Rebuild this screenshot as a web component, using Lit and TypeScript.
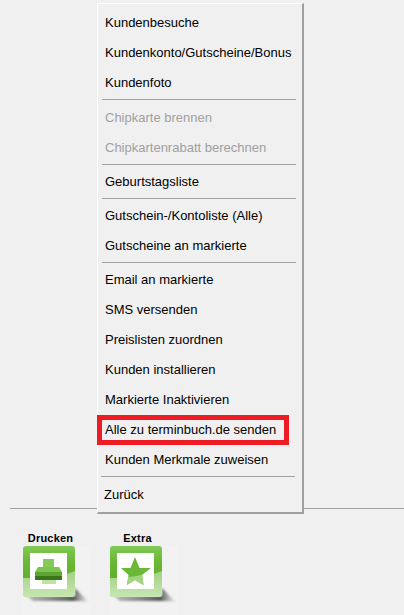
import { LitElement, html, css, svg } from "lit";
import { customElement } from "lit/decorators.js";

type Entry = { t?: string; off?: boolean; sep?: "" | "wide" | "end"; last?: boolean };
const MENU: Entry[] = [
  { t: "Kundenbesuche" },
  { t: "Kundenkonto/Gutscheine/Bonus" },
  { t: "Kundenfoto" },
  { sep: "wide" },
  { t: "Chipkarte brennen", off: true },
  { t: "Chipkartenrabatt berechnen", off: true },
  { sep: "" },
  { t: "Geburtstagsliste" },
  { sep: "" },
  { t: "Gutschein-/Kontoliste (Alle)" },
  { t: "Gutscheine an markierte" },
  { sep: "" },
  { t: "Email an markierte" },
  { t: "SMS versenden" },
  { t: "Preislisten zuordnen" },
  { t: "Kunden installieren" },
  { t: "Markierte Inaktivieren" },
  { t: "Alle zu terminbuch.de senden" },
  { t: "Kunden Merkmale zuweisen" },
  { sep: "end" },
  { t: "Zurück", last: true },
];

const tile = (id: string, glyph: unknown) => html`
  <svg class="tile" width="70" height="70" viewBox="0 0 70 70">
    <defs>
      <linearGradient id="bg${id}" x1="0" y1="0" x2="0" y2="1">
        <stop offset="0" stop-color="#82ca55" />
        <stop offset="0.3" stop-color="#6ab836" />
        <stop offset="0.6" stop-color="#62b02c" />
        <stop offset="1" stop-color="#74c040" />
      </linearGradient>
      <linearGradient id="sh${id}" x1="0" y1="0" x2="1" y2="0">
        <stop offset="0" stop-color="#555" stop-opacity="0.35" />
        <stop offset="0.75" stop-color="#444" stop-opacity="0.9" />
        <stop offset="1" stop-color="#888" stop-opacity="0.05" />
      </linearGradient>
      <linearGradient id="gl${id}" x1="0" y1="0" x2="0" y2="1">
        <stop offset="0" stop-color="#fff" stop-opacity="0.42" />
        <stop offset="1" stop-color="#fff" stop-opacity="0.6" />
      </linearGradient>
      <filter id="bl${id}"><feGaussianBlur stdDeviation="1.1" /></filter>
      <filter id="so${id}"><feGaussianBlur stdDeviation="0.5" /></filter>
    </defs>
    <rect x="0" y="0" width="68" height="69" fill="#f2f2f2" />
    <path d="M4 50 H52 V42 L66 56 L56 55 H10 Z" fill="url(#sh${id})" filter="url(#bl${id})" />
    <rect x="0" y="0" width="52" height="51" rx="3" fill="url(#bg${id})" />
    <path
      d="M0 32 C16 32 36 32 52 25 V48 A3 3 0 0 1 49 51 H3 A3 3 0 0 1 0 48 Z"
      fill="url(#gl${id})"
      filter="url(#so${id})"
    />
    <rect x="7" y="7" width="37" height="36" fill="#fff" />
    ${glyph}
  </svg>
`;

const printer = svg`
  <rect x="20" y="13" width="11" height="8" fill="#86cb5a" />
  <path d="M15 21 H36 L39 26 H12 Z" fill="#7cc64e" />
  <rect x="12" y="26" width="27" height="4" fill="#5fa332" />
  <rect x="12" y="30" width="27" height="4" fill="#3a7619" />
  <rect x="19" y="34" width="14" height="4" fill="#bfe3a4" />
`;
const star = svg`
  <path d="M25 11 L29.5 22 H41 L32 29 L33.5 39 L25 34 L17 39 L18.5 29 L11 22 H20.5 Z" fill="#6ab836" />
  <path d="M18.2 31 C22 31 28 30 32.3 28.5 L33.5 39 L25 34 L17 39 Z" fill="#a3d580" />
`;

@customElement("app-root")
export class AppRoot extends LitElement {
  static styles = css`
    :host {
      display: block;
      position: relative;
      width: 404px;
      height: 615px;
      overflow: hidden;
      background: #f0f0f0;
      font-family: "Liberation Sans", Arial, sans-serif;
      font-size: 13px;
    }
    .bottom {
      padding: 508px 0 0 10px;
    }
    .rule {
      height: 1px;
      background: #a0a0a0;
    }
    .tools {
      display: flex;
      gap: 17px;
      padding: 22px 0 0 13px;
    }
    .tool {
      width: 70px;
      display: flex;
      flex-direction: column;
    }
    .label {
      width: 55px;
      text-align: center;
      font-size: 11px;
      font-weight: bold;
      letter-spacing: 0.2px;
      line-height: 15px;
      color: #000;
    }
    .tile {
      display: block;
    }
    .menu {
      position: absolute;
      left: 97px;
      top: 3px;
      width: 207px;
      height: 511px;
      padding: 4px 0 0 1px;
      box-sizing: border-box;
      background: #f0f0f0;
      border-top: 1px solid #fff;
      border-left: 1px solid #fff;
      border-right: 2px solid #a0a0a0;
      border-bottom: 2px solid #a0a0a0;
    }
    .item {
      height: 30px;
      line-height: 30px;
      padding-left: 6px;
      color: #000;
      white-space: nowrap;
    }
    .item.off {
      color: #a0a0a0;
    }
    .item.last {
      padding-left: 5px;
    }
    .sep {
      height: 1px;
      margin: 1px 6px 2px 3px;
      background: #a0a0a0;
    }
    .sep.wide {
      margin-bottom: 3px;
    }
    .sep.end {
      margin: 1px 7px 3px 2px;
    }
    .hl {
      position: absolute;
      left: -1px;
      top: 411px;
      width: 192px;
      height: 30px;
      box-sizing: border-box;
      border: 5px solid #ed1c24;
    }
  `;

  render() {
    return html`
      <div class="bottom">
        <div class="rule"></div>
        <div class="tools">
          <div class="tool"><div class="label">Drucken</div>${tile("a", printer)}</div>
          <div class="tool"><div class="label">Extra</div>${tile("b", star)}</div>
        </div>
      </div>
      <div class="menu">
        ${MENU.map((m) =>
          m.t
            ? html`<div class="item ${m.off ? "off" : ""} ${m.last ? "last" : ""}">${m.t}</div>`
            : html`<div class="sep ${m.sep}"></div>`
        )}
        <div class="hl"></div>
      </div>
    `;
  }
}
